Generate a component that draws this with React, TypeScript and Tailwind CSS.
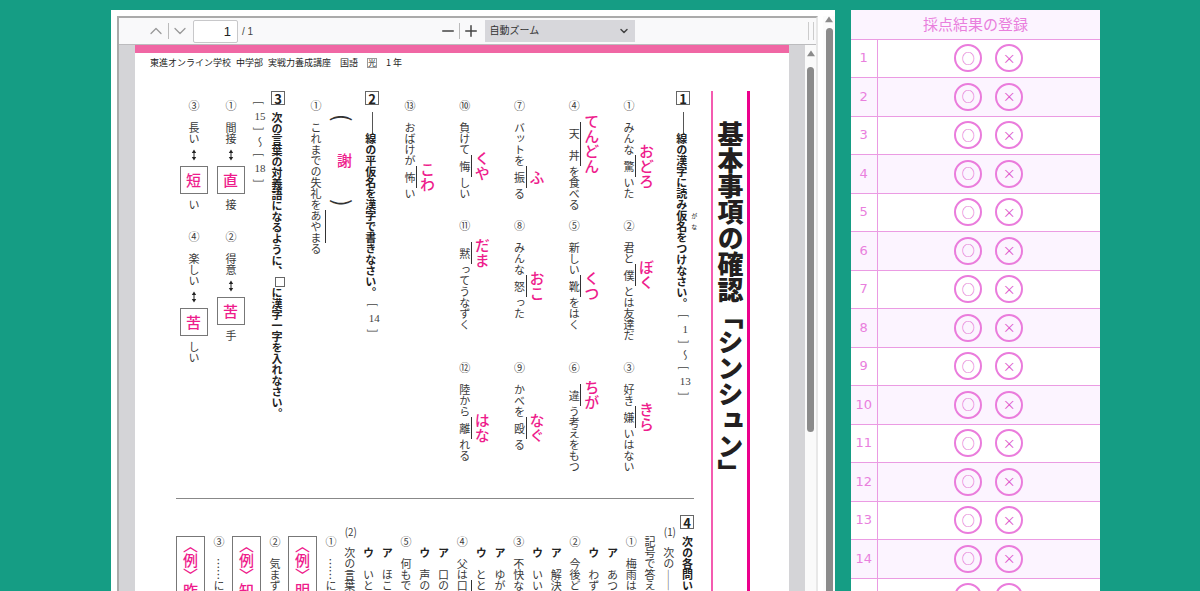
import React from 'react';
import { clsx } from 'clsx';
import { ChevronDown, ChevronUp, Minus, Plus } from 'lucide-react';

interface SideLineProps {
  className?: string;
  children: React.ReactNode;
}

const SideLine: React.FC<SideLineProps> = ({ className, children }) => (
  <span className={clsx('relative', className)}>
    {children}
    <span className="absolute bottom-0 left-full top-0 ml-px w-px bg-[#333]" />
  </span>
);

interface MarkProps {
  chars: string;
  answer: string;
}

// Kanji with a side line and the reading written next to it
const Mark: React.FC<MarkProps> = ({ chars, answer }) => (
  <SideLine className="inline-flex">
    {[...chars].map((char, index) => (
      <span key={index} className="h-[22px] text-center">
        {char}
      </span>
    ))}
    <span className="absolute bottom-0 left-full top-0 ml-1 flex items-center justify-center text-[15px] font-medium leading-[16px] text-[#ee1c8c]">
      {answer}
    </span>
  </SideLine>
);

interface Question {
  no: string;
  before: string;
  mark: string;
  answer: string;
  after: string;
}

const readingColumns: Question[][] = [
  [
    { no: '①', before: 'みんな', mark: '驚', answer: 'おどろ', after: 'いた' },
    { no: '②', before: '君と', mark: '僕', answer: 'ぼく', after: 'とは友達だ' },
    { no: '③', before: '好き', mark: '嫌', answer: 'きら', after: 'いはない' },
  ],
  [
    { no: '④', before: '', mark: '天丼', answer: 'てんどん', after: 'を食べる' },
    { no: '⑤', before: '新しい', mark: '靴', answer: 'くつ', after: 'をはく' },
    { no: '⑥', before: '', mark: '違', answer: 'ちが', after: 'う考えをもつ' },
  ],
  [
    { no: '⑦', before: 'バットを', mark: '振', answer: 'ふ', after: 'る' },
    { no: '⑧', before: 'みんな', mark: '怒', answer: 'おこ', after: 'った' },
    { no: '⑨', before: 'かべを', mark: '殴', answer: 'なぐ', after: 'る' },
  ],
  [
    { no: '⑩', before: '負けて', mark: '悔', answer: 'くや', after: 'しい' },
    { no: '⑪', before: '', mark: '黙', answer: 'だま', after: 'ってうなずく' },
    { no: '⑫', before: '陸から', mark: '離', answer: 'はな', after: 'れる' },
  ],
  [{ no: '⑬', before: 'おばけが', mark: '怖', answer: 'こわ', after: 'い' }],
];

const oppositeColumns = [
  [
    { no: '①', word: '間接', answer: '直', after: '接' },
    { no: '②', word: '得意', answer: '苦', after: '手' },
  ],
  [
    { no: '③', word: '長い', answer: '短', after: 'い' },
    { no: '④', word: '楽しい', answer: '苦', after: 'しい' },
  ],
];

// kind: 'sub' sits one step higher, 'choice' starts with a bold kana
const lowerColumns = [
  { kind: 'sub', head: '(1)', text: '　次の――' },
  { kind: 'plain', head: '', text: '記号で答え' },
  { kind: 'plain', head: '①', text: '　梅雨は' },
  { kind: 'choice', head: 'ア', text: '　あつ' },
  { kind: 'choice', head: 'ウ', text: '　わず' },
  { kind: 'plain', head: '②', text: '　今後ど' },
  { kind: 'choice', head: 'ア', text: '　解決' },
  { kind: 'choice', head: 'ウ', text: '　いい' },
  { kind: 'plain', head: '③', text: '　不快な' },
  { kind: 'choice', head: 'ア', text: '　ゆが' },
  { kind: 'choice', head: 'ウ', text: '　とと' },
  { kind: 'plain', head: '④', text: '　父は', mark: '口' },
  { kind: 'choice', head: 'ア', text: '　口の' },
  { kind: 'choice', head: 'ウ', text: '　声の' },
  { kind: 'plain', head: '⑤', text: '　何もで' },
  { kind: 'choice', head: 'ア', text: '　ほこ' },
  { kind: 'choice', head: 'ウ', text: '　いと' },
  { kind: 'sub', head: '(2)', text: '　次の言葉' },
  { kind: 'plain', head: '①', text: '　……に' },
];

const SectionNumber = ({ value }: { value: number }) => (
  <span className="flex size-[14px] shrink-0 items-center justify-center border border-[#666] text-[13px] font-bold leading-none text-[#222] [writing-mode:horizontal-tb]">
    {value}
  </span>
);

const Heading = ({ value, line, children }: { value: number; line?: boolean; children: React.ReactNode }) => (
  <h2 className="flex w-[14px] items-center text-[11px] font-bold leading-[11px] text-[#222] [writing-mode:vertical-rl]">
    <SectionNumber value={value} />
    {line && <span className="mt-[7px] h-[21px] w-px shrink-0 bg-[#555]" />}
    <span className={clsx(!line && 'mt-[7px]')}>{children}</span>
  </h2>
);

// Score range such as [15] ~ [18]
const Range = ({ items }: { items: string[] }) => (
  <span className="inline-flex align-middle text-[11px] font-normal leading-[11px] text-[#444]">
    {items.map((item, index) => (
      <span
        key={index}
        className={clsx(
          'h-[13px] w-[11px] text-center',
          /\d/.test(item) && "font-['Liberation_Serif',serif] [text-combine-upright:all]",
        )}
      >
        {item}
      </span>
    ))}
  </span>
);

const DoubleArrow = () => (
  <svg viewBox="0 0 6 12" className="h-[12px] w-[6px] shrink-0" fill="#222">
    <path d="M3 0.5 5.2 4H3.5v4h1.7L3 11.5 0.8 8h1.7V4H0.8z" />
  </svg>
);

const AnswerBox = ({ children }: { children: React.ReactNode }) => (
  <span className="flex size-[28px] shrink-0 items-center justify-center border border-[#777] text-[15px] font-medium text-[#ee1c8c]">
    {children}
  </span>
);

const Example = ({ text }: { text: string }) => (
  <div className="mt-[21px] w-[29px] border border-b-0 border-[#777] px-[6px] pt-px text-[15px] font-medium leading-[15px] text-[#ee1c8c]">
    <span className="[writing-mode:vertical-rl]">〈例〉{text}</span>
  </div>
);

const UpperPart = () => (
  <section className="flex h-[408px] flex-row-reverse items-start border-b border-[#888] pr-1">
    <Heading value={1} line>
      線の漢字に読み
      <span className="relative">
        仮名
        <span className="absolute left-full top-0 flex h-[22px] justify-around text-[6px] font-normal leading-[8px]">
          <span>が</span>
          <span>な</span>
        </span>
      </span>
      をつけなさい。
      <Range items={['[', '1', ']', '～', '[', '13', ']']} />
    </Heading>

    <div className="mr-[42px] mt-[9px] flex w-[230px] flex-row-reverse justify-between">
      {readingColumns.map((column, index) => (
        <div key={index} className="grid w-[11px] grid-rows-[120px_142px_auto]">
          {column.map((q) => (
            <p key={q.no} className="[writing-mode:vertical-rl]">
              {q.no}　{q.before}
              <Mark chars={q.mark} answer={q.answer} />
              {q.after}
            </p>
          ))}
        </div>
      ))}
    </div>

    <div className="mr-[25px]">
      <Heading value={2} line>
        線の平仮名を漢字で書きなさい。
        <Range items={['[', '14', ']']} />
      </Heading>
    </div>
    <div className="mr-[10px] mt-[23px] flex h-[92px] w-[22px] items-center justify-between text-[22px] leading-[22px] text-[#333] [writing-mode:vertical-rl]">
      <span>(</span>
      <span className="text-[15px] font-medium text-[#ee1c8c]">謝</span>
      <span>)</span>
    </div>
    <p className="mr-[12px] mt-[9px] [writing-mode:vertical-rl]">
      ①　これまでの失礼を
      <SideLine>あやま</SideLine>る
    </p>

    <div className="mr-[25px]">
      <Heading value={3}>
        次の言葉の対義語になるように、
        <span className="inline-block size-[10px] border border-[#666] align-middle" />
        に漢字一字を入れなさい。
      </Heading>
    </div>
    <p className="mr-[6px] mt-[5px] [writing-mode:vertical-rl]">
      <Range items={['[', '15', ']', '～', '[', '18', ']']} />
    </p>
    <div className="mr-[6px] mt-[9px] flex flex-row-reverse gap-[9px]">
      {oppositeColumns.map((column, index) => (
        <div key={index} className="grid w-[28px] grid-rows-[131px_auto]">
          {column.map((q) => (
            <p key={q.no} className="flex items-center [writing-mode:vertical-rl]">
              <span>
                {q.no}　{q.word}
              </span>
              <span className="flex h-[22px] items-center justify-center">
                <DoubleArrow />
              </span>
              <AnswerBox>{q.answer}</AnswerBox>
              <span className="mt-[5px]">{q.after}</span>
            </p>
          ))}
        </div>
      ))}
    </div>
  </section>
);

const LowerPart = () => (
  <section className="flex flex-row-reverse items-start pt-4">
    <Heading value={4}>次の各問い</Heading>
    <div className="mr-[6px] flex w-[349px] flex-row-reverse justify-between">
      {lowerColumns.map((column, index) => (
        <p
          key={index}
          className={clsx(
            'w-[11px] [writing-mode:vertical-rl]',
            column.kind === 'sub' && 'mt-[10px]',
            column.kind === 'plain' && 'mt-[21px]',
            column.kind === 'choice' && 'mt-[32px]',
          )}
        >
          <span
            className={clsx(
              column.kind === 'sub' && '[text-combine-upright:all]',
              column.kind === 'choice' && 'font-bold text-[#222]',
            )}
          >
            {column.head}
          </span>
          {column.text}
          {column.mark && <SideLine>{column.mark}</SideLine>}
        </p>
      ))}
    </div>
    <div className="mr-2 flex flex-row-reverse gap-2">
      <Example text="明" />
      <p className="mt-[21px] w-[11px] [writing-mode:vertical-rl]">②　気まず</p>
      <Example text="知" />
      <p className="mt-[21px] w-[11px] [writing-mode:vertical-rl]">③　……に</p>
      <Example text="昨" />
    </div>
  </section>
);

const Sheet = () => (
  <article className="min-w-0 flex-1 overflow-hidden border-t-8 border-[#f067a4] bg-white">
    <header className="flex h-[38px] items-start gap-[5px] whitespace-nowrap pl-[15px] pt-1 text-[9px] leading-[12px] text-[#222]">
      <span>東進オンライン学校</span>
      <span>中学部</span>
      <span>実戦力養成講座</span>
      <span className="ml-1">国語</span>
      <span className="mx-1 mt-px border border-[#999] text-[8px] leading-[8px]">光</span>
      <span>1 年</span>
    </header>
    <div className="flex h-[1000px] items-stretch justify-end whitespace-nowrap pr-[39px] text-[11px] leading-[11px] text-[#3a3a3a]">
      <div className="mr-[17px] w-[518px]">
        <UpperPart />
        <LowerPart />
      </div>
      <h1 className="border-l-2 border-r-3 border-l-[#f45bb0] border-r-[#ec008c] pl-[3px] pr-[3px] pt-[30px] text-[26px] font-black leading-[28px] text-[#231f20] [writing-mode:vertical-rl]">
        基本事項の確認「シンシュン」
      </h1>
    </div>
  </article>
);

const Arrow = () => (
  <svg viewBox="0 0 10 7" className="h-[7px] w-[10px] shrink-0" fill="#8b8b8b">
    <path d="M5 0.5 9 6.2H1z" />
  </svg>
);

const Toolbar = () => (
  <div className="flex h-[27px] shrink-0 items-center border-b border-[#bcbcbe] bg-[#f9f9fa] pl-[27px] text-[#444]">
    <button type="button" aria-label="前のページ" className="text-[#999]">
      <ChevronUp size={20} strokeWidth={1.5} />
    </button>
    <span className="ml-[2px] h-4 w-px bg-[#bbb]" />
    <button type="button" aria-label="次のページ" className="ml-px text-[#999]">
      <ChevronDown size={20} strokeWidth={1.5} />
    </button>
    <input
      type="text"
      aria-label="ページ"
      defaultValue="1"
      className="ml-[3px] h-[23px] w-[45px] rounded-xs border border-[#c8c8ca] bg-white pr-[6px] text-right font-['Liberation_Sans',sans-serif] text-[13px] text-[#222]"
    />
    <span className="ml-1 font-['Liberation_Sans',sans-serif] text-[10px]">/ 1</span>
    <div className="flex flex-1 items-center justify-center pl-3">
      <button type="button" aria-label="縮小">
        <Minus size={18} strokeWidth={2} />
      </button>
      <span className="ml-[2px] h-4 w-px bg-[#bbb]" />
      <button type="button" aria-label="拡大" className="ml-[2px]">
        <Plus size={18} strokeWidth={2} />
      </button>
      <div className="relative ml-[5px]">
        <select
          aria-label="ズーム"
          className="block h-[22px] w-[150px] appearance-none bg-[#d7d7db] pb-[3px] pl-[5px] pr-5 text-[10px] leading-4 text-[#333]"
        >
          <option>自動ズーム</option>
        </select>
        <ChevronDown size={12} strokeWidth={3} className="pointer-events-none absolute right-[5px] top-[5px]" />
      </div>
    </div>
    <span className="mr-[2px] h-[18px] w-[6px] border-x border-[#ccc]" />
  </div>
);

const Viewer = () => (
  <div className="flex min-w-0 flex-1 bg-white pl-[6px] pt-[6px]">
    <div className="flex min-w-0 flex-1 flex-col border-2 border-b-0 border-[#aaa] border-r-[#e8e8e8]">
      <Toolbar />
      <div className="flex min-h-0 flex-1 bg-[#d4d4d7] pl-4">
        <Sheet />
        <div className="ml-4 flex w-[11px] shrink-0 flex-col items-center bg-[#fafafa] pt-[5px]">
          <Arrow />
          <span className="mt-[10px] h-[365px] w-[7px] rounded-full bg-[#8b8b8b]" />
        </div>
      </div>
    </div>
    <div className="ml-[5px] flex w-3 shrink-0 flex-col items-center bg-[#fcfcfc]">
      <Arrow />
      <span className="mt-[5px] w-[7px] flex-1 rounded-t-full bg-[#8b8b8b]" />
    </div>
  </div>
);

const MarkButton = ({ children, label }: { children: React.ReactNode; label: string }) => (
  <button
    type="button"
    aria-label={label}
    className="flex size-7 items-center justify-center rounded-full border-2 border-[#ea7cdc] pb-[2px] text-[13px] leading-none text-[#dc4fca]"
  >
    {children}
  </button>
);

const ScoreTable = () => (
  <table className="w-[249px] shrink-0 self-start border-collapse bg-white text-[#e97fdd]">
    <thead>
      <tr className="h-[29px] border-b border-[#eb9be3] bg-[#fcf4ff]">
        <th colSpan={2} className="p-0 text-[15px] font-normal leading-5">
          採点結果の登録
        </th>
      </tr>
    </thead>
    <tbody>
      {Array.from({ length: 18 }, (_, index) => (
        <tr key={index} className="border-b border-[#eb9be3] odd:h-[38px] even:h-[39px] even:bg-[#fcf4ff]">
          <th
            scope="row"
            className="w-[26px] border-r border-[#eb9be3] p-0 font-['DejaVu_Sans',sans-serif] text-[13px] font-normal"
          >
            {index + 1}
          </th>
          <td className="p-0">
            <div className="flex justify-center gap-[13px]">
              <MarkButton label={`${index + 1} 正解`}>○</MarkButton>
              <MarkButton label={`${index + 1} 不正解`}>×</MarkButton>
            </div>
          </td>
        </tr>
      ))}
    </tbody>
  </table>
);

export default function App() {
  return (
    <main
      lang="ja"
      className="flex h-screen gap-4 overflow-hidden bg-[#159d84] pl-[111px] pr-[100px] pt-[10px] font-['Noto_Sans_CJK_JP',sans-serif]"
    >
      <Viewer />
      <ScoreTable />
    </main>
  );
}
